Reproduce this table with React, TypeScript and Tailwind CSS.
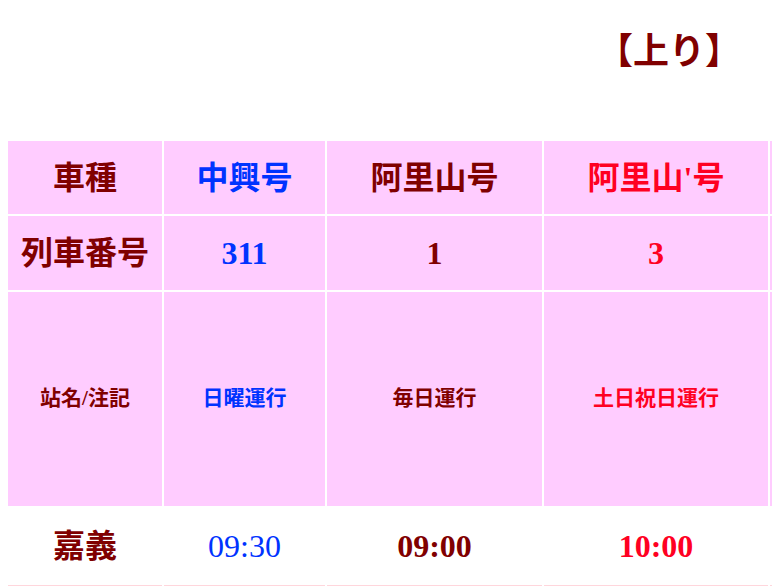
const font = { fontFamily: '"Liberation Serif", "Noto Sans CJK JP", serif' };

const DARK = "text-[#800000]";
const BLUE = "text-[#0033ff]";
const RED = "text-[#ff0022]";

type Cell = { text: string; color: string; bold?: boolean };

const header: Cell[] = [
  { text: "車種", color: DARK },
  { text: "中興号", color: BLUE },
  { text: "阿里山号", color: DARK },
  { text: "阿里山'号", color: RED },
];

const numbers: Cell[] = [
  { text: "列車番号", color: DARK },
  { text: "311", color: BLUE },
  { text: "1", color: DARK },
  { text: "3", color: RED },
];

const notes: Cell[] = [
  { text: "站名/注記", color: DARK },
  { text: "日曜運行", color: BLUE },
  { text: "毎日運行", color: DARK },
  { text: "土日祝日運行", color: RED },
];

const chiayi: Cell[] = [
  { text: "嘉義", color: DARK, bold: true },
  { text: "09:30", color: BLUE, bold: false },
  { text: "09:00", color: DARK, bold: true },
  { text: "10:00", color: RED, bold: true },
];

const widths = ["w-[154px]", "w-[161px]", "w-[215px]", "w-[224px]", "w-[200px]"];

export default function App() {
  return (
    <div className="w-[772px] h-[586px] overflow-hidden bg-white" style={font}>
      <div className="flex justify-end pr-[31px] pt-[26px] h-[139px]">
        <h2 className="text-[36px] font-bold text-[#800000] leading-[52px]">【上り】</h2>
      </div>
      <table className="ml-[6px] border-separate border-spacing-[2px] table-fixed w-[966px]">
        <tbody>
          <tr className="h-[73px]">
            {header.map((c, i) => (
              <td key={i} className={`${widths[i]} bg-[#fcf] text-center text-[32px] font-bold ${c.color}`}>
                {c.text}
              </td>
            ))}
            <td className={`${widths[4]} bg-[#fcf]`} />
          </tr>
          <tr className="h-[74px]">
            {numbers.map((c, i) => (
              <td key={i} className={`bg-[#fcf] text-center text-[32px] font-bold ${c.color}`}>
                {c.text}
              </td>
            ))}
            <td className="bg-[#fcf]" />
          </tr>
          <tr className="h-[214px]">
            {notes.map((c, i) => (
              <td key={i} className={`bg-[#fcf] text-center text-[21px] font-bold ${c.color}`}>
                {c.text}
              </td>
            ))}
            <td className="bg-[#fcf]" />
          </tr>
          <tr className="h-[75px]">
            {chiayi.map((c, i) => (
              <td
                key={i}
                className={`text-center text-[32px] ${c.bold ? "font-bold" : "font-normal"} ${c.color}`}
              >
                {c.text}
              </td>
            ))}
            <td />
          </tr>
          <tr className="h-[40px]">
            <td className="bg-[#ffd6dc]" />
            <td className="bg-[#ffd6dc]" />
            <td className="bg-[#ffd6dc]" />
            <td className="bg-[#ffd6dc]" />
            <td className="bg-[#ffd6dc]" />
          </tr>
        </tbody>
      </table>
    </div>
  );
}
